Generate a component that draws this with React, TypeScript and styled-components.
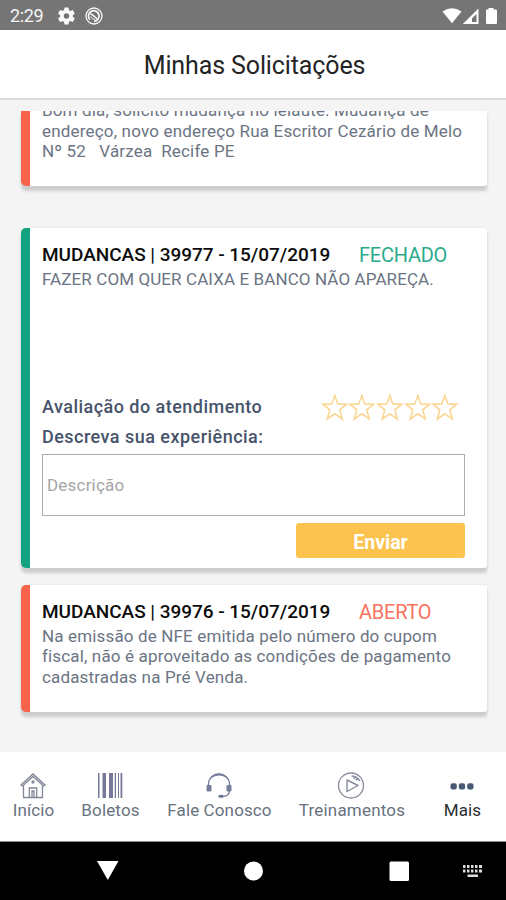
import React from "react";
import styled, { createGlobalStyle } from "styled-components";

const GlobalStyle = createGlobalStyle`
  * { box-sizing: border-box; }
  body { margin: 0; background: #f4f4f4; font-family: Roboto, "Liberation Sans", sans-serif; }
`;

const Screen = styled.div`
  width: 506px;
  height: 900px;
  display: flex;
  flex-direction: column;
  overflow: hidden;
  background: #f4f4f4;
`;

const StatusBar = styled.header`
  height: 30px;
  flex: none;
  display: flex;
  align-items: center;
  padding: 1px 7px 0 10px;
  background: #757575;
  color: #f5f5f5;
`;

const Clock = styled.span`
  width: 48px;
  font-size: 18px;
  line-height: 28px;
  letter-spacing: -0.35px;
`;

const StatusIcons = styled.div`
  display: flex;
  align-items: center;
  gap: 10px;
  svg { display: block; }
`;

const SignalIcons = styled(StatusIcons)`
  margin-left: auto;
  gap: 0;
`;

const TitleBar = styled.div`
  height: 70px;
  flex: none;
  display: flex;
  justify-content: center;
  padding-top: 21px;
  background: #fff;
  border-bottom: 2px solid #dcdcdc;
`;

const Title = styled.h1`
  margin: 0;
  padding-left: 3px;
  font-size: 25px;
  font-weight: 400;
  line-height: 30px;
  letter-spacing: -0.12px;
  color: #242424;
`;

const List = styled.main`
  height: 641px;
  flex: none;
  margin-top: 11px;
  padding: 0 19px 0 21px;
  overflow: hidden;
`;

const Card = styled.article<{ $accent: string; $height: number; $gap: number }>`
  display: flow-root;
  height: ${(p) => p.$height}px;
  margin-bottom: ${(p) => p.$gap}px;
  padding: 14px 22px 0 12px;
  background: #fff;
  border-left: 9px solid ${(p) => p.$accent};
  border-radius: 5px 3px 3px 5px;
  box-shadow: 0 5px 3px #cdcdcd, 0 0 2px #ddd;
`;

const ClippedCard = styled(Card)`
  padding-top: 0;
  border-top-left-radius: 0;
  border-top-right-radius: 0;
`;

const CardHead = styled.div`
  display: flex;
  align-items: center;
  height: 25px;
  margin-bottom: 2px;
  white-space: pre;
`;

const CardTitle = styled.h2`
  width: 317px;
  flex: none;
  margin: 0;
  font-size: 19px;
  font-weight: 500;
  line-height: 24px;
  letter-spacing: -0.03px;
  color: #0c0c0c;
`;

const Status = styled.span<{ $color: string }>`
  padding-top: 1px;
  font-size: 20px;
  line-height: 24px;
  font-weight: 400;
  letter-spacing: -0.25px;
  color: ${(p) => p.$color};
  opacity: 0.9;
`;

const Line = styled.p<{ $spacing?: number }>`
  margin: 0;
  font-size: 17px;
  line-height: 20.4px;
  letter-spacing: ${(p) => p.$spacing ?? 0.15}px;
  white-space: pre;
  color: #6b7483;
`;

const FirstLine = styled(Line)`
  margin-top: -10.6px;
`;

const Rating = styled.div`
  display: flex;
  align-items: center;
  justify-content: space-between;
  height: 30px;
  margin-top: 103px;
  padding-right: 6px;
`;

const Label = styled.div<{ $spacing: number }>`
  font-size: 18px;
  font-weight: 500;
  line-height: 30px;
  letter-spacing: ${(p) => p.$spacing}px;
  color: #46536a;
`;

const Stars = styled.div`
  display: flex;
  svg { display: block; }
`;

const Field = styled.textarea`
  display: block;
  width: 423px;
  height: 62px;
  margin: 2px 0 0;
  padding: 20px 4px;
  border: 1px solid #adadad;
  border-radius: 0;
  outline: 0;
  resize: none;
  overflow: hidden;
  background: #fff;
  font: 400 17px/20px Roboto, "Liberation Sans", sans-serif;
  letter-spacing: 0.2px;
  &::placeholder { color: #a5a5a5; opacity: 1; }
`;

const Send = styled.button`
  display: block;
  width: 169px;
  height: 35px;
  margin: 7px 0 0 auto;
  padding: 4px 0 0;
  border: 0;
  border-radius: 3px;
  background: #fcc34f;
  color: #fff;
  font: 700 19.5px/30px Roboto, "Liberation Sans", sans-serif;
`;

const TabBar = styled.nav`
  height: 90px;
  flex: none;
  display: flex;
  padding-top: 19px;
  background: #fff;
  border-bottom: 1px solid #8a8a8a;
`;

const Tab = styled.a<{ $width: number; $active?: boolean; $spacing: number }>`
  width: ${(p) => p.$width}px;
  display: flex;
  flex-direction: column;
  align-items: center;
  font-size: 17px;
  line-height: 23px;
  letter-spacing: ${(p) => p.$spacing}px;
  white-space: nowrap;
  color: ${(p) => (p.$active ? "#2d2f33" : "#687280")};
  svg { display: block; margin-right: 1.5px; }
`;

const SystemBar = styled.footer`
  height: 58px;
  flex: none;
  display: flex;
  align-items: center;
  background: #000;
  svg { display: block; }
`;

const GREEN = "#10a281";
const RED = "#f8634c";

const Star = () => (
  <svg width="27.7" height="28" viewBox="0 0 27.7 28" fill="none" stroke="#fad794" strokeWidth="1.6">
    <path d="M13.8 2.5 16.8 10.9 25.7 11.2 18.8 16.8 21.3 26 13.8 20.8 6.3 26 8.8 16.8 1.9 11.2 10.8 10.9Z" />
  </svg>
);

const Gear = () => (
  <svg width="17" height="18" viewBox="2 2 20 20" fill="#fafafa">
    <path d="M19.4 13a7.8 7.8 0 0 0 0-2l2.1-1.6c.2-.2.3-.4.1-.7l-2-3.4c-.1-.3-.4-.3-.6-.3l-2.5 1a7 7 0 0 0-1.7-1l-.4-2.6a.5.5 0 0 0-.5-.4h-4a.5.5 0 0 0-.4.4L9.1 5a7 7 0 0 0-1.7 1l-2.5-1c-.2 0-.5 0-.6.3l-2 3.4c-.1.3-.1.5.1.7L4.6 11a7.8 7.8 0 0 0 0 2l-2.2 1.6c-.2.2-.2.4-.1.7l2 3.4c.1.3.4.3.6.3l2.5-1a7 7 0 0 0 1.7 1l.4 2.6c0 .2.2.4.4.4h4c.3 0 .5-.2.5-.4l.4-2.6a7 7 0 0 0 1.7-1l2.5 1c.2 0 .5 0 .6-.3l2-3.4c.2-.3.1-.5-.1-.7zM12 15.2a3.2 3.2 0 1 1 0-6.4 3.2 3.2 0 0 1 0 6.4Z" />
  </svg>
);

const Radar = () => (
  <svg width="18" height="18" viewBox="0 0 18 18" fill="none" stroke="#fafafa">
    <circle cx="9" cy="9" r="8" strokeWidth="1.3" />
    <path d="M4.8 12.5A5.3 5.3 0 1 1 9 14.3" strokeWidth="1.7" />
    <path d="m5.5 6.3 7 5.7" strokeWidth="1.5" />
    <path d="M6 9.5a3.2 3.2 0 0 0 4.3 2.6" strokeWidth="1" />
  </svg>
);

export default function App() {
  return (
    <>
      <GlobalStyle />
      <Screen>
        <StatusBar>
          <Clock>2:29</Clock>
          <StatusIcons>
            <Gear />
            <Radar />
          </StatusIcons>
          <SignalIcons>
            <svg width="57" height="18" viewBox="0 0 57 18" fill="#fff">
              <path d="M0.500 4.500Q10-2 19.500 4.500L10 16.300Z" />
              <path fillRule="evenodd" d="M36.500 1.500V17H20.800ZM34.500 7 30 11.500V15h4.500Z" />
              <path d="M46.500 2.500V1h5v1.500H54q1 0 1 1V16q0 1-1 1H45q-1 0-1-1V3.500q0-1 1-1Z" />
            </svg>
          </SignalIcons>
        </StatusBar>
        <TitleBar>
          <Title>Minhas Solicitações</Title>
        </TitleBar>
        <List>
          <ClippedCard $accent={RED} $height={75} $gap={42}>
            <FirstLine>Bom dia, solicito mudança no leiaute. Mudança de</FirstLine>
            <Line $spacing={0.18}>endereço, novo endereço Rua Escritor Cezário de Melo</Line>
            <Line $spacing={0.18}>{"Nº 52   Várzea  Recife PE"}</Line>
          </ClippedCard>
          <Card $accent={GREEN} $height={340} $gap={17}>
            <CardHead>
              <CardTitle>MUDANCAS | 39977 - 15/07/2019</CardTitle>
              <Status $color={GREEN}>FECHADO</Status>
            </CardHead>
            <Line $spacing={0.1}>FAZER COM QUER CAIXA E BANCO NÃO APAREÇA.</Line>
            <Rating>
              <Label $spacing={0.47}>Avaliação do atendimento</Label>
              <Stars>
                {[0, 1, 2, 3, 4].map((n) => (
                  <Star key={n} />
                ))}
              </Stars>
            </Rating>
            <Label $spacing={0.47}>Descreva sua experiência:</Label>
            <Field placeholder="Descrição" />
            <Send>Enviar</Send>
          </Card>
          <Card $accent={RED} $height={127} $gap={0}>
            <CardHead>
              <CardTitle>MUDANCAS | 39976 - 15/07/2019</CardTitle>
              <Status $color={RED}>ABERTO</Status>
            </CardHead>
            <Line>Na emissão de NFE emitida pelo número do cupom</Line>
            <Line>fiscal, não é aproveitado as condições de pagamento</Line>
            <Line>cadastradas na Pré Venda.</Line>
          </Card>
        </List>
        <TabBar>
          <Tab $width={67} $spacing={0.12}>
            <svg width="28" height="28" viewBox="0 0 28 28" fill="none" stroke="#838899" strokeWidth="1.3">
              <path d="M2 14 14 3l12 11-1.500 1L14 5.500 3.500 15ZM4.500 15v11.500h19V15M10.300 26.500v-9.500h7.400v9.500M13 26v-6h2v6" />
              <circle cx="14" cy="11" r="1" />
            </svg>
            Início
          </Tab>
          <Tab $width={87} $spacing={0.15}>
            <svg width="28" height="28" viewBox="0 0 28 28" fill="#777998">
              <path d="M2 2h1.500v25H2zM6.500 2h3.500v25H6.500zM13 2h4v25h-4zM18.700 2H20v25h-1.300zM22 2h1v25h-1zM24.500 2h1.800v25h-1.800z" />
            </svg>
            Boletos
          </Tab>
          <Tab $width={131} $spacing={0.12}>
            <svg width="28" height="28" viewBox="0 0 28 28" fill="none" stroke="#777e9c">
              <path d="M3.500 14v-1a10.500 10 0 0 1 21 0v1M24.500 20c0 3.800-3 5.500-8 5.500" strokeWidth="1.3" />
              <path d="M5.500 7Q14-1 22.500 7L21 6Q14 2 7 6Z" fill="#777e9c" />
              <path d="M2 14.500h4v5.500H2zM22 14.500h4v5.500h-4z" fill="#777e9c" />
              <ellipse cx="16" cy="25.300" rx="2.800" ry="1.500" fill="#6b7390" stroke="none" />
            </svg>
            Fale Conosco
          </Tab>
          <Tab $width={134} $spacing={0.2}>
            <svg width="28" height="28" viewBox="0 0 28 28" fill="none" stroke="#868c9a">
              <circle cx="14" cy="14.500" r="12.500" strokeWidth="1.3" />
              <path d="M10 9v11.500L21 14.500ZM14.500 5q5.500.5 8.500 5M16.500 7.500l3-1.500M19 9l3-1.500" strokeWidth="1.400" strokeLinejoin="round" />
            </svg>
            Treinamentos
          </Tab>
          <Tab $width={87} $active $spacing={0.12}>
            <svg width="28" height="28" viewBox="0 0 28 28" fill="#485974">
              <rect x="2.500" y="12.300" width="6.300" height="6.300" rx="2" />
              <rect x="10.800" y="12.300" width="6.300" height="6.300" rx="2" />
              <rect x="19.200" y="12.300" width="6.300" height="6.300" rx="2" />
            </svg>
            Mais
          </Tab>
        </TabBar>
        <SystemBar>
          <svg width="506" height="58" viewBox="0 0 506 58" fill="#fff">
            <path d="M97 19h21.500L107.800 38Z" />
            <circle cx="253.500" cy="29" r="9.500" />
            <rect x="389.500" y="19.500" width="19.500" height="19.500" rx="1.500" />
            <path fill="#ddd" d="M463 23h2.500v3H463zM467 23h2.500v3H467zM471 23h2.500v3H471zM475 23h2.500v3H475zM479 23h3v3h-3zM463 27.500h2.500v3H463zM467 27.500h2.500v3H467zM471 27.500h2.500v3H471zM475 27.500h2.500v3H475zM479 27.500h3v3h-3zM467.500 32.500h10.500v2.500h-10.500z" />
          </svg>
        </SystemBar>
      </Screen>
    </>
  );
}
